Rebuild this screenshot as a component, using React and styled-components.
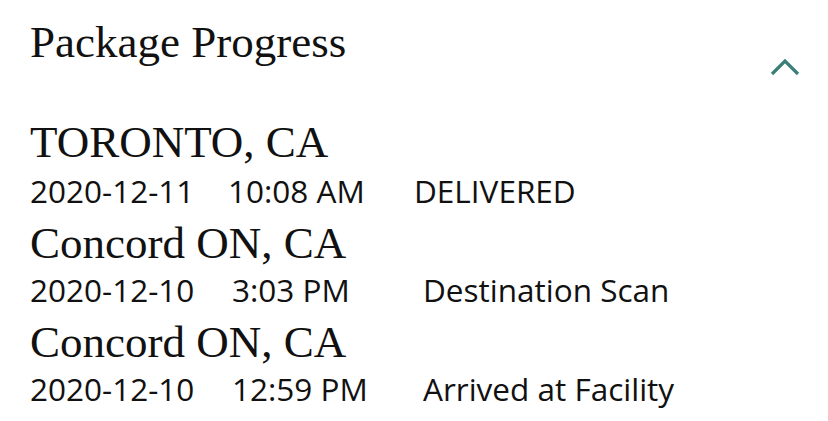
import React from "react";
import styled, { createGlobalStyle } from "styled-components";

const Global = createGlobalStyle`
  html, body { margin: 0; padding: 0; background: #fff; }
  body { font-family: "Open Sans", sans-serif; color: #111; }
`;

const Page = styled.div`
  width: 828px;
  height: 421px;
  box-sizing: border-box;
  padding: 17px 28px 0 30px;
  overflow: hidden;
`;

const Header = styled.div`
  display: flex;
  justify-content: space-between;
  align-items: flex-start;
`;

const Title = styled.h2`
  margin: 0;
  font-family: "Liberation Serif", serif;
  font-weight: 400;
  font-size: 45px;
  line-height: 50px;
  color: #111;
`;

const Toggle = styled.button`
  border: 0;
  background: none;
  padding: 0;
  margin-top: 40px;
  width: 30px;
  height: 20px;
  display: flex;
  align-items: center;
  justify-content: center;
  cursor: pointer;
`;

const List = styled.div`
  display: flex;
  flex-direction: column;
  margin-top: 38px;
  gap: 5px;
`;

const Entry = styled.div`
  display: flex;
  flex-direction: column;
`;

const Location = styled.div`
  font-family: "Liberation Serif", serif;
  font-size: 45px;
  line-height: 54px;
  color: #111;
`;

const Meta = styled.div`
  display: grid;
  grid-template-columns: ${(p) => (p.$first ? "198px 186px" : "202px 191px")} auto;
  margin-top: ${(p) => (p.$first ? "2px" : "0")};
  font-family: "Open Sans", sans-serif;
  font-size: 31.5px;
  line-height: 40px;
  color: #111;
`;

const events = [
  { loc: "TORONTO, CA", date: "2020-12-11", time: "10:08 AM", status: "DELIVERED" },
  { loc: "Concord ON, CA", date: "2020-12-10", time: "3:03 PM", status: "Destination Scan" },
  { loc: "Concord ON, CA", date: "2020-12-10", time: "12:59 PM", status: "Arrived at Facility" },
];

export default function App() {
  return (
    <>
      <Global />
      <Page>
        <Header>
          <Title>Package Progress</Title>
          <Toggle aria-label="Collapse">
            <svg width="30" height="18" viewBox="0 0 30 18">
              <path d="M2 16 L15 3 L28 16" fill="none" stroke="#3a8078" strokeWidth="3.2" />
            </svg>
          </Toggle>
        </Header>
        <List>
          {events.map((e, i) => (
            <Entry key={i}>
              <Location>{e.loc}</Location>
              <Meta $first={i === 0}>
                <span>{e.date}</span>
                <span>{e.time}</span>
                <span>{e.status}</span>
              </Meta>
            </Entry>
          ))}
        </List>
      </Page>
    </>
  );
}
